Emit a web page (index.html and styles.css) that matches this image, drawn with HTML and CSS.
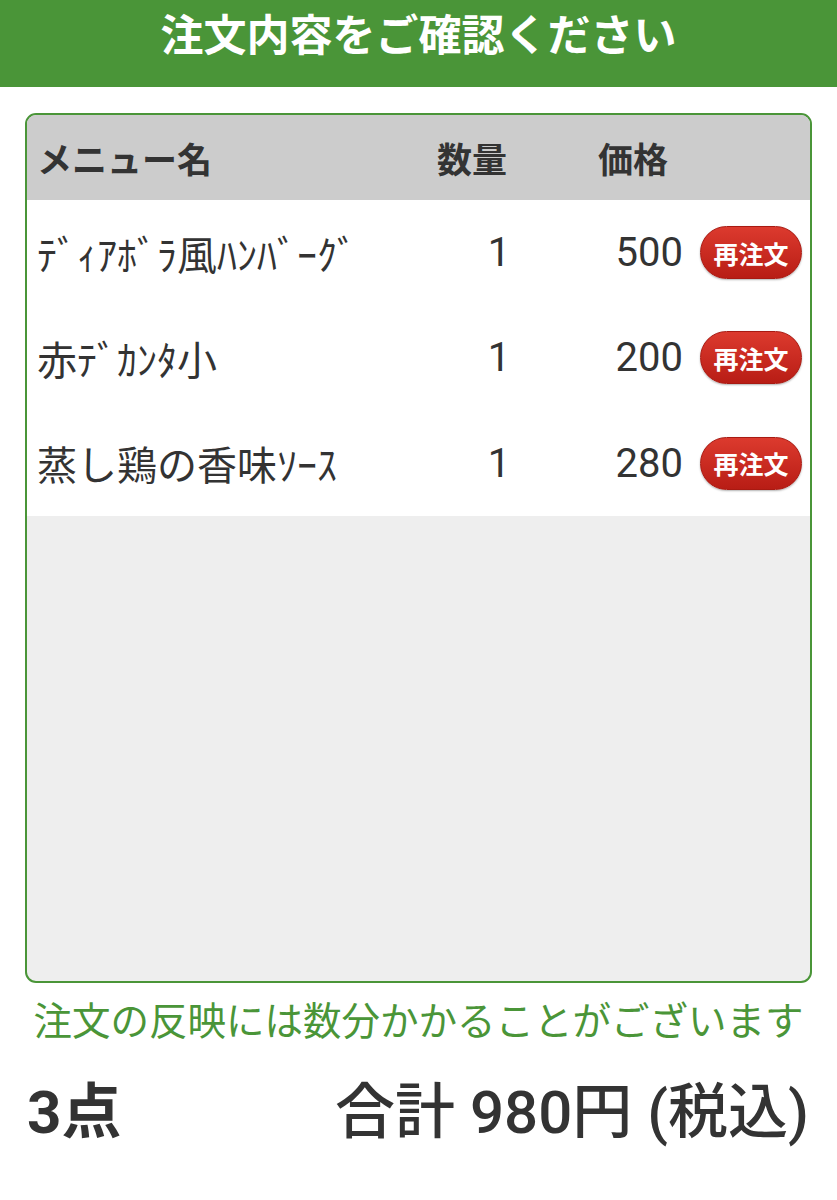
FILE: index.html
```html
<!DOCTYPE html>
<html lang="ja">

<head>
    <meta charset="UTF-8">
    <meta name="viewport" content="width=device-width, initial-scale=1.0">
    <title>注文内容をご確認ください</title>
    <link rel="stylesheet" href="styles.css">
</head>

<body>

    <div class="title-bar">注文内容をご確認ください</div>

    <div class="order-card">
        <div class="order-head">
            <div class="col-name">メニュー名</div>
            <div class="col-qty">数量</div>
            <div class="col-price">価格</div>
            <div></div>
        </div>

        <div class="order-row">
            <div class="col-name">ﾃﾞｨｱﾎﾞﾗ風ﾊﾝﾊﾞｰｸﾞ</div>
            <div class="col-qty">1</div>
            <div class="col-price">500</div>
            <div class="col-btn"><button class="reorder">再注文</button></div>
        </div>
        <div class="order-row">
            <div class="col-name">赤ﾃﾞｶﾝﾀ小</div>
            <div class="col-qty">1</div>
            <div class="col-price">200</div>
            <div class="col-btn"><button class="reorder">再注文</button></div>
        </div>
        <div class="order-row">
            <div class="col-name">蒸し鶏の香味ｿｰｽ</div>
            <div class="col-qty">1</div>
            <div class="col-price">280</div>
            <div class="col-btn"><button class="reorder">再注文</button></div>
        </div>
    </div>

    <p class="notice">注文の反映には数分かかることがございます</p>

    <div class="summary">
        <div class="count">3点</div>
        <div class="total">合計 980円 (税込)</div>
    </div>

</body>

</html>
```

FILE: styles.css
```css
body {
    margin: 0;
    font-family: Roboto, "Noto Sans CJK JP", sans-serif;
    color: #333;
    background: #fff;
}

.title-bar {
    background-color: #4a9538;
    color: white;
    font-size: 43px;
    font-weight: bold;
    text-align: center;
    height: 87px;
    line-height: 72px;
}

.order-card {
    margin: 26px 25px 0 25px;
    height: 866px;
    border: 2px solid #4a9538;
    border-radius: 11px;
    background: #eeeeee;
    overflow: hidden;
}

.order-head,
.order-row {
    display: grid;
    grid-template-columns: 1fr 124px 122px 119px;
    align-items: center;
    padding: 0 8px 0 10px;
}

.order-head {
    background: #cccccc;
    height: 85px;
    font-size: 35px;
    font-weight: bold;
}

.order-head .col-price {
    padding-left: 37px;
}

.order-row {
    background: #ffffff;
    height: 105px;
    font-size: 40px;
}

.order-row:last-child {
    height: 106px;
}

.order-row .col-qty {
    text-align: center;
}

.order-row .col-price {
    text-align: right;
}

.col-btn {
    display: flex;
    justify-content: flex-end;
}

.reorder {
    width: 102px;
    height: 53px;
    border: 1px solid #a81a12;
    border-radius: 27px;
    background: linear-gradient(#dc3a2e, #b81d15);
    color: white;
    font-family: "Noto Sans CJK JP", sans-serif;
    font-size: 25px;
    font-weight: bold;
    padding: 0;
    box-shadow: 0 1px 2px rgba(0, 0, 0, 0.3);
}

.notice {
    margin: 7px 0 0;
    text-align: center;
    color: #4a9538;
    font-size: 38.5px;
}

.summary {
    display: flex;
    justify-content: space-between;
    align-items: center;
    padding: 0 28px 0 27px;
    margin-top: 17px;
    font-size: 60px;
}

.count {
    font-weight: bold;
}

.total {
    font-weight: 500;
}
```
